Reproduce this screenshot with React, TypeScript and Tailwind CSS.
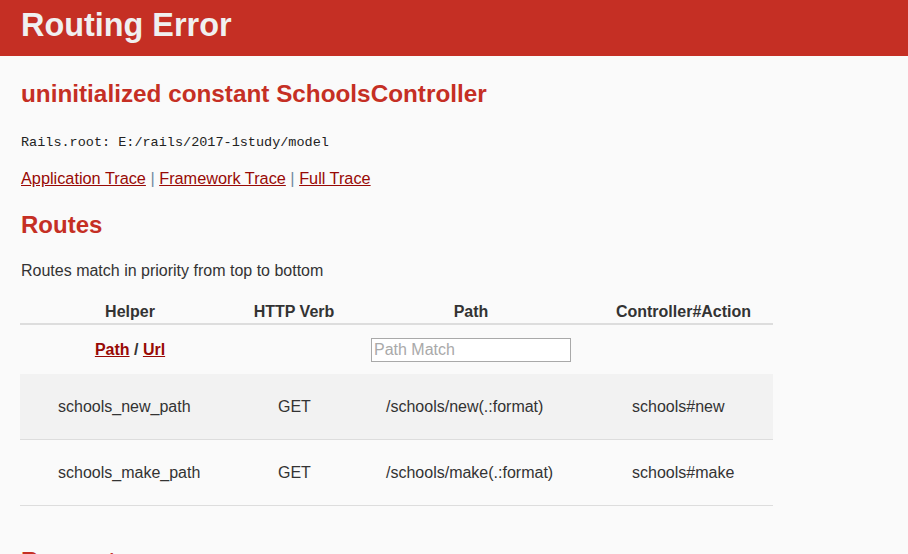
import React from "react";

const rows = [
  { helper: "schools_new_path", verb: "GET", path: "/schools/new(.:format)", action: "schools#new", odd: true },
  { helper: "schools_make_path", verb: "GET", path: "/schools/make(.:format)", action: "schools#make", odd: false },
];

export default function App() {
  return (
    <div className="min-h-[554px] bg-[#fafafa] text-[#333] font-['Liberation_Sans',Arial,sans-serif] text-[16px] leading-[18px]">
      <header className="h-[56px] bg-[#c52f24] pt-[7px] pl-[21px]">
        <h1 className="text-[32.4px] leading-[36px] font-bold text-[#f0f0f0]">Routing Error</h1>
      </header>
      <div className="px-[21px]">
        <h2 className="mt-[25px] text-[24.3px] leading-[25px] font-bold text-[#c52f24]">
          uninitialized constant SchoolsController
        </h2>
        <p className="mt-[28px] font-['Liberation_Mono','Courier_New',monospace] text-[13.5px] leading-[18px] text-[#222]">
          Rails.root: E:/rails/2017-1study/model
        </p>
        <div className="mt-[17px] text-[16.3px]">
          <a className="text-[#980905] underline" href="#">Application Trace</a>
          <span className="text-[#6f8ba0]"> | </span>
          <a className="text-[#980905] underline" href="#">Framework Trace</a>
          <span className="text-[#6f8ba0]"> | </span>
          <a className="text-[#980905] underline" href="#">Full Trace</a>
        </div>
        <h2 className="mt-[25px] text-[24px] leading-[25px] font-bold text-[#c52f24]">Routes</h2>
        <p className="mt-[25px]">Routes match in priority from top to bottom</p>
        <div className="mt-[23px] w-[753px] -ml-px">
          <div className="grid grid-cols-[220px_108px_246px_179px] border-b-2 border-[#ddd] pb-[2px] font-bold text-center">
            <div>Helper</div>
            <div>HTTP Verb</div>
            <div>Path</div>
            <div>Controller#Action</div>
          </div>
          <div className="grid grid-cols-[220px_108px_246px_179px] h-[49px] items-center">
            <div className="text-center font-bold">
              <a className="text-[#980905] underline" href="#">Path</a>
              <span> / </span>
              <a className="text-[#980905] underline" href="#">Url</a>
            </div>
            <div />
            <div className="flex justify-center">
              <input
                className="w-[200px] h-[24px] border border-[#a9a9a9] bg-white px-[2px] text-[16px] placeholder:text-[#a9a9a9] outline-none"
                placeholder="Path Match"
              />
            </div>
            <div />
          </div>
          {rows.map((r) => (
            <div
              key={r.helper}
              className={
                "grid grid-cols-[220px_108px_246px_179px] h-[66px] items-center border-b border-[#ddd] " +
                (r.odd ? "bg-[#f2f2f2]" : "")
              }
            >
              <div className="pl-[38px]">{r.helper}</div>
              <div className="pl-[38px]">{r.verb}</div>
              <div className="pl-[38px]">{r.path}</div>
              <div className="pl-[38px]">{r.action}</div>
            </div>
          ))}
        </div>
        <h2 className="mt-[42px] text-[24px] leading-[25px] font-bold text-[#c52f24]">Request</h2>
      </div>
    </div>
  );
}
